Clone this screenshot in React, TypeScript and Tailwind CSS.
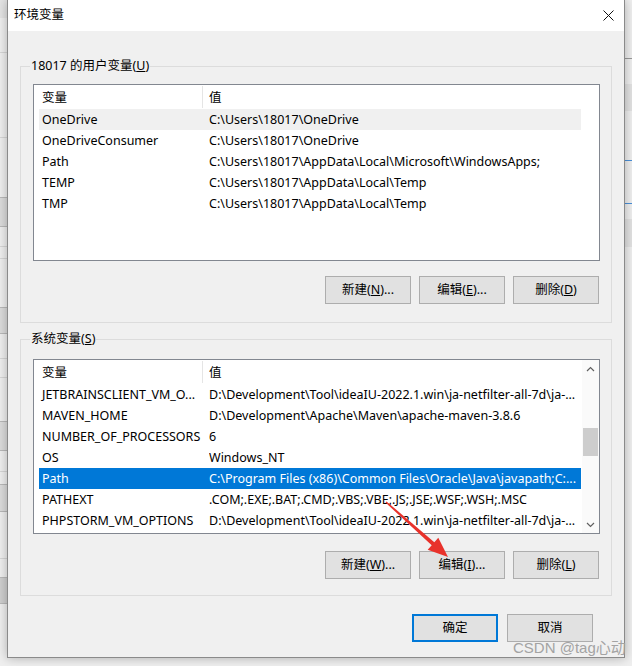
import type { ReactNode } from "react";

type Var = { name: string; value: string; state?: "gray" | "blue" };

const userVars: Var[] = [
  { name: "OneDrive", value: "C:\\Users\\18017\\OneDrive", state: "gray" },
  { name: "OneDriveConsumer", value: "C:\\Users\\18017\\OneDrive" },
  { name: "Path", value: "C:\\Users\\18017\\AppData\\Local\\Microsoft\\WindowsApps;" },
  { name: "TEMP", value: "C:\\Users\\18017\\AppData\\Local\\Temp" },
  { name: "TMP", value: "C:\\Users\\18017\\AppData\\Local\\Temp" },
];

const sysVars: Var[] = [
  { name: "JETBRAINSCLIENT_VM_O...", value: "D:\\Development\\Tool\\ideaIU-2022.1.win\\ja-netfilter-all-7d\\ja-..." },
  { name: "MAVEN_HOME", value: "D:\\Development\\Apache\\Maven\\apache-maven-3.8.6" },
  { name: "NUMBER_OF_PROCESSORS", value: "6" },
  { name: "OS", value: "Windows_NT" },
  { name: "Path", value: "C:\\Program Files (x86)\\Common Files\\Oracle\\Java\\javapath;C:...", state: "blue" },
  { name: "PATHEXT", value: ".COM;.EXE;.BAT;.CMD;.VBS;.VBE;.JS;.JSE;.WSF;.WSH;.MSC" },
  { name: "PHPSTORM_VM_OPTIONS", value: "D:\\Development\\Tool\\ideaIU-2022.1.win\\ja-netfilter-all-7d\\ja-..." },
];

function Row({ v }: { v: Var }) {
  const tone =
    v.state === "blue" ? "bg-[#0078d7] text-white" : v.state === "gray" ? "bg-[#f0f0f0]" : "";
  return (
    <div className={`ml-[5px] flex h-[21px] w-[542px] shrink-0 items-center whitespace-nowrap pt-[2px] ${tone}`}>
      <div className="w-[170px] overflow-hidden pl-[3px]">{v.name}</div>
      <div className="flex-1 overflow-hidden">{v.value}</div>
    </div>
  );
}

function Header() {
  return (
    <div className="ml-[5px] flex h-[24px] w-[542px] shrink-0 items-center">
      <div className="w-[163px] pl-[3px] pt-[2px]">变量</div>
      <div className="h-[22px] w-px bg-[#e5e5e5]" />
      <div className="pl-[6px] pt-[2px]">值</div>
    </div>
  );
}

function Btn({ children, primary }: { children: ReactNode; primary?: boolean }) {
  return (
    <div
      className={`flex h-[28px] w-[86px] items-center justify-center bg-[#e1e1e1] ${
        primary ? "border-2 border-[#0078d7]" : "border border-[#adadad]"
      }`}
    >
      {children}
    </div>
  );
}

function Group({ label, children, className }: { label: ReactNode; children: ReactNode; className?: string }) {
  return (
    <div className={`relative h-[257px] border border-[#dcdcdc] px-[12px] ${className ?? ""}`}>
      <div className="absolute left-[9px] top-[-9px] bg-[#f0f0f0] px-[1px] leading-[16px]">{label}</div>
      {children}
    </div>
  );
}

function Chevron({ up }: { up?: boolean }) {
  return (
    <svg width="9" height="6" viewBox="0 0 9 6">
      <path
        d={up ? "M1 5 L4.5 1.5 L8 5" : "M1 1 L4.5 4.5 L8 1"}
        fill="none"
        stroke="#606060"
        strokeWidth="1.2"
      />
    </svg>
  );
}

export default function App() {
  return (
    <div className="relative h-[666px] w-[632px] overflow-hidden bg-[#efefef] font-['Noto_Sans','Noto_Sans_CJK_SC',sans-serif] text-[12.5px] text-black">
      {/* window behind, left edge */}
      <div className="absolute left-0 top-0 h-[18px] w-[7px] bg-[#e4e4e4]" />
      <div className="absolute left-0 top-[52px] h-px w-[7px] bg-[#d6d6d6]" />
      <div className="absolute left-0 top-[137px] h-px w-[7px] bg-[#d6d6d6]" />
      <div className="absolute left-0 top-[197px] h-[30px] w-[7px] border-y border-[#b9b9b9] bg-[#dcdcdc]" />
      <div className="absolute left-0 top-[246px] h-px w-[7px] bg-[#d6d6d6]" />
      <div className="absolute left-0 top-[258px] h-px w-[7px] bg-[#d6d6d6]" />
      <div className="absolute left-0 top-[307px] h-[27px] w-[7px] border-y border-[#b9b9b9] bg-[#dcdcdc]" />
      <div className="absolute left-0 top-[358px] h-px w-[7px] bg-[#d6d6d6]" />
      <div className="absolute left-0 top-[377px] h-px w-[7px] bg-[#d6d6d6]" />
      <div className="absolute left-0 top-[421px] h-[30px] w-[7px] border-y border-[#b9b9b9] bg-[#dcdcdc]" />
      <div className="absolute left-0 top-[471px] h-px w-[7px] bg-[#d6d6d6]" />
      <div className="absolute left-0 top-[484px] h-[28px] w-[7px] border-y border-[#b9b9b9] bg-[#dcdcdc]" />
      <div className="absolute left-0 top-[558px] h-px w-[7px] bg-[#d6d6d6]" />
      <div className="absolute left-0 top-[577px] h-[27px] w-[7px] border-y border-[#b9b9b9] bg-[#cfcfcf]" />
      {/* window behind, right edge */}
      <div className="absolute right-0 top-[58px] h-px w-[7px] bg-[#9a9a9a]" />
      <div className="absolute right-0 top-[84px] h-[27px] w-[7px] bg-[#e2e2e2]" />
      <div className="absolute right-0 top-[160px] h-px w-[7px] bg-[#4a90d9]" />
      <div className="absolute right-0 top-[203px] h-px w-[7px] bg-[#4a90d9]" />
      <div className="absolute right-0 top-[219px] h-[28px] w-[7px] bg-[#e2e2e2]" />

      {/* dialog */}
      <div className="absolute left-[7px] top-0 flex h-[658px] w-[618px] flex-col border-x border-b border-[#8a8a8a] bg-[#f0f0f0] shadow-[0_0_10px_rgba(0,0,0,0.28)]">
        <div className="flex h-[31px] shrink-0 items-center justify-between bg-white pl-[6px] pr-[10px]">
          <span className="text-[12.5px]">环境变量</span>
          <svg width="11" height="11" viewBox="0 0 11 11">
            <path d="M0.5 0.5 L10.5 10.5 M10.5 0.5 L0.5 10.5" stroke="#111" strokeWidth="1" />
          </svg>
        </div>

        <div className="flex flex-col px-[12px] pt-[35px]">
          <Group
            label={
              <>
                18017 的用户变量(<u>U</u>)
              </>
            }
          >
            <div className="mt-[17px] flex h-[177px] w-[567px] flex-col overflow-hidden border border-[#828790] bg-white">
              <Header />
              {userVars.map((v) => (
                <Row key={v.name} v={v} />
              ))}
            </div>
            <div className="mt-[15px] flex justify-end gap-[8px]">
              <Btn>
                新建(<u>N</u>)...
              </Btn>
              <Btn>
                编辑(<u>E</u>)...
              </Btn>
              <Btn>
                删除(<u>D</u>)
              </Btn>
            </div>
          </Group>

          <Group
            className="mt-[16px]"
            label={
              <>
                系统变量(<u>S</u>)
              </>
            }
          >
            <div className="mt-[19px] flex h-[175px] w-[567px] overflow-hidden border border-[#828790] bg-white">
              <div className="flex flex-1 flex-col overflow-hidden">
                <Header />
                {sysVars.map((v) => (
                  <Row key={v.name} v={v} />
                ))}
              </div>
              <div className="flex w-[17px] flex-col items-center bg-[#fafafa]">
                <div className="flex h-[17px] items-center justify-center">
                  <Chevron up />
                </div>
                <div className="mt-[51px] h-[28px] w-[15px] bg-[#cdcdcd]" />
                <div className="flex-1" />
                <div className="flex h-[17px] items-center justify-center">
                  <Chevron />
                </div>
              </div>
            </div>
            <div className="mt-[17px] flex justify-end gap-[8px]">
              <Btn>
                新建(<u>W</u>)...
              </Btn>
              <Btn>
                编辑(<u>I</u>)...
              </Btn>
              <Btn>
                删除(<u>L</u>)
              </Btn>
            </div>
          </Group>

          <div className="mt-[18px] flex justify-end gap-[9px] pr-[19px]">
            <Btn primary>确定</Btn>
            <Btn>取消</Btn>
          </div>
        </div>
      </div>

      {/* annotation arrow */}
      <svg className="pointer-events-none absolute left-0 top-0" width="632" height="666" viewBox="0 0 632 666">
        <polygon
          points="385.5,502.6 431.7,545.2 427.7,549.7 448,557 438.3,537.7 434.3,542.2 386.5,501.4"
          fill="#e8322b"
        />
      </svg>

      {/* watermark */}
      <div className="pointer-events-none absolute left-[513px] top-[639px] whitespace-nowrap font-['Liberation_Sans','Noto_Sans_CJK_SC',sans-serif] text-[15px] leading-[18px] text-[#a3a3a3]">
        CSDN @tag心动
      </div>
    </div>
  );
}
